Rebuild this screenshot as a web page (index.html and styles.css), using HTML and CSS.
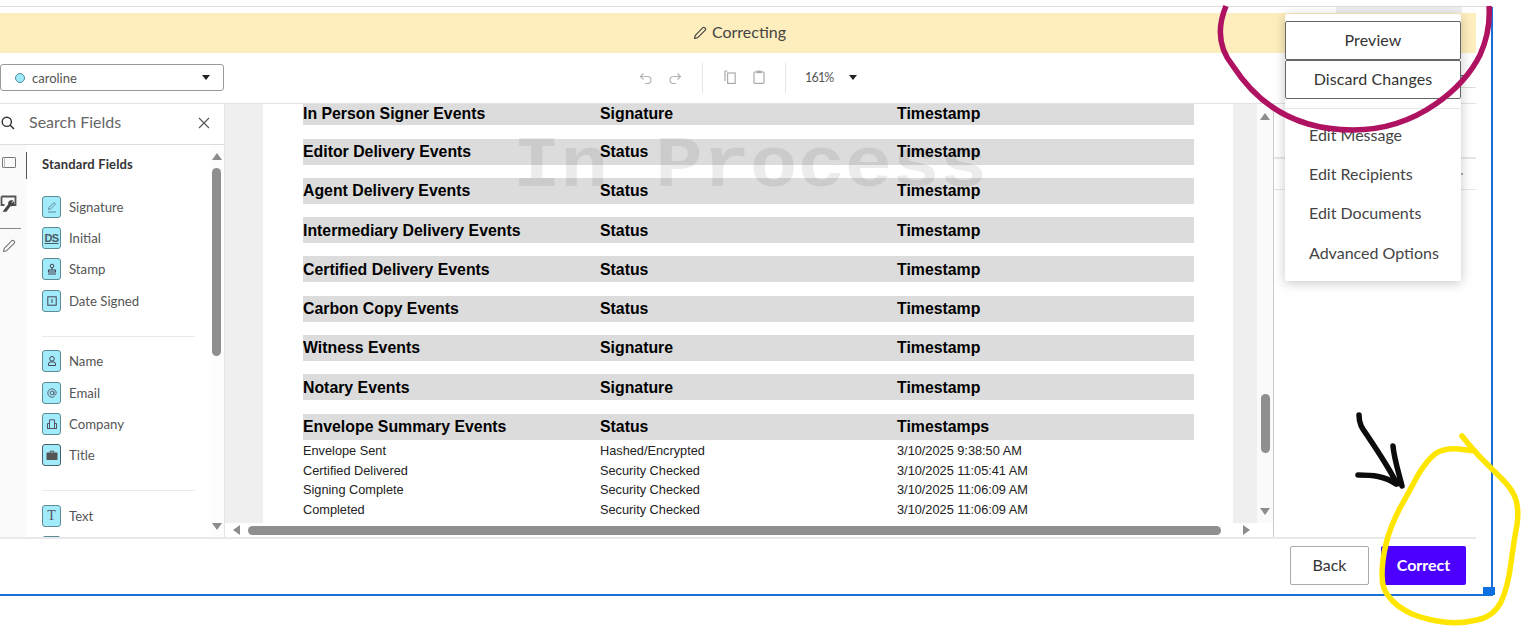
FILE: index.html
```html
<!DOCTYPE html>
<html lang="en">
<head>
<meta charset="utf-8">
<title>Correcting</title>
<link rel="stylesheet" href="styles.css">
</head>
<body>
<div class="topline"></div>
<div class="frame">
  <div class="strip"><div class="strip-tab"></div></div>
  <div class="banner">
    <svg class="banner-pencil" viewBox="0 0 14 14"><path d="M1.5 12.5l.8-3.2L9.900 1.700a1.200 1.200 0 0 1 1.700 0l.7.7a1.200 1.200 0 0 1 0 1.700l-7.600 7.600z" fill="none" stroke="#444" stroke-width="1.200" stroke-linejoin="round"/></svg>
    <span>Correcting</span>
  </div>
  <div class="toolbar">
    <div class="select"><span class="dot"></span><span class="select-name">caroline</span><span class="caret select-caret"></span></div>
    <svg class="tool tool-undo" viewBox="0 0 14 12"><path d="M4.500 1.500L1.500 4.500l3 3M1.500 4.500h7a3.500 3.500 0 0 1 0 7H6" fill="none" stroke="#b4b4b4" stroke-width="1.200"/></svg>
    <svg class="tool tool-redo" viewBox="0 0 14 12"><path d="M9.500 1.500l3 3-3 3M12.500 4.500h-7a3.500 3.500 0 0 0 0 7H8" fill="none" stroke="#b4b4b4" stroke-width="1.200"/></svg>
    <span class="sep sep-one"></span>
    <svg class="tool tool-copy" viewBox="0 0 12 14"><path d="M3.500 1H1v10" fill="none" stroke="#aaa" stroke-width="1.200"/><rect x="3.600" y="3" width="7.600" height="10.400" fill="none" stroke="#aaa" stroke-width="1.200"/></svg>
    <svg class="tool tool-paste" viewBox="0 0 12 14"><rect x="1" y="2" width="10" height="11.400" rx=".8" fill="none" stroke="#aaa" stroke-width="1.200"/><rect x="3.500" y=".6" width="5" height="2.600" fill="#aaa"/></svg>
    <span class="sep sep-two"></span>
    <span class="zoom-value">161%</span>
    <span class="caret zoom-caret"></span>
    <span class="toolbar-tab">Documents</span>
  </div>
  <div class="main">
    <aside class="fields">
      <div class="search">
        <svg class="search-icon" viewBox="0 0 14 14"><circle cx="5.800" cy="5.800" r="4.600" fill="none" stroke="#333" stroke-width="1.400"/><path d="M9.200 9.200l3.800 3.800" stroke="#333" stroke-width="1.500"/></svg>
        <span class="search-text">Search Fields</span>
        <svg class="search-close" viewBox="0 0 12 12"><path d="M1 1l10 10M11 1L1 11" stroke="#555" stroke-width="1.100"/></svg>
      </div>
      <div class="fields-body">
        <div class="rail">
          <div class="rail-tab">
            <svg class="rail-box" viewBox="0 0 14 11"><rect x=".5" y=".5" width="13" height="10" rx=".6" fill="none" stroke="#777"/><path d="M2.500 .5v10" stroke="#bbb"/></svg>
          </div>
          <svg class="rail-tool" viewBox="0 0 17 17"><path d="M1.500 1.500h14v8.500h-4.500M1.500 1.500v8.500h3" fill="none" stroke="#555" stroke-width="1.800"/><path d="M4 16l5-6.500c-.7-2 .8-4 3-3.600L10.400 7.700l1.500 1.400 1.700-1.600c.3 2-1.600 3.600-3.500 3L6 16z" fill="#444" stroke="#444" stroke-width="1.400"/></svg>
          <div class="rail-rule"></div>
          <svg class="rail-pencil" viewBox="0 0 14 14"><path d="M1.500 12.500l.8-3.200L9.900 1.700a1.200 1.200 0 0 1 1.700 0l.7.7a1.200 1.200 0 0 1 0 1.700l-7.600 7.600z" fill="none" stroke="#777" stroke-width="1.100" stroke-linejoin="round"/></svg>
        </div>
        <div class="field-list">
          <div class="field-title">Standard Fields</div>
          <div class="field"><span class="ficon"><svg viewBox="0 0 12 14"><path d="M2.500 9.500l.5-2L8 2.500l1.500 1.500-5 5zM2 12h8" fill="none" stroke="#5f8d98" stroke-width="1"/></svg></span><span>Signature</span></div>
          <div class="field"><span class="ficon ficon-ds">DS</span><span>Initial</span></div>
          <div class="field"><span class="ficon"><svg viewBox="0 0 12 14"><circle cx="6" cy="4" r="1.800" fill="none" stroke="#445" stroke-width="1"/><path d="M6 6v1.500M2.500 8h7v2h-7zM2 12h8" fill="none" stroke="#445" stroke-width="1.100"/></svg></span><span>Stamp</span></div>
          <div class="field"><span class="ficon"><svg viewBox="0 0 12 14"><rect x="1.800" y="2.800" width="8.400" height="8.400" fill="none" stroke="#445" stroke-width="1"/><path d="M6 5v4" stroke="#445" stroke-width="1"/></svg></span><span>Date Signed</span></div>
          <div class="field-rule"></div>
          <div class="field"><span class="ficon"><svg viewBox="0 0 12 14"><circle cx="6" cy="4.800" r="2.300" fill="none" stroke="#445" stroke-width="1"/><path d="M2.500 11.500V10a2 2 0 0 1 2-2h3a2 2 0 0 1 2 2v1.500z" fill="none" stroke="#445" stroke-width="1"/></svg></span><span>Name</span></div>
          <div class="field"><span class="ficon"><svg viewBox="0 0 12 14"><circle cx="6" cy="7" r="1.900" fill="none" stroke="#556" stroke-width=".9"/><path d="M7.900 5.300V8c0 1.500 2.300 1.300 2.300-1a4.200 4.200 0 1 0-1.700 3.400" fill="none" stroke="#556" stroke-width=".9"/></svg></span><span>Email</span></div>
          <div class="field"><span class="ficon"><svg viewBox="0 0 12 14"><path d="M3.500 11V2.800h5V11M1.500 11V6.500h2M8.500 6.500h2V11M1 11.500h10" fill="none" stroke="#556" stroke-width="1"/></svg></span><span>Company</span></div>
          <div class="field"><span class="ficon ficon-dark"><svg viewBox="0 0 12 14"><path d="M4.200 4.500V3.200h3.600v1.300" fill="none" stroke="#555" stroke-width="1"/><rect x=".5" y="4.500" width="11" height="7.500" rx=".8" fill="#555"/></svg></span><span>Title</span></div>
          <div class="field-rule"></div>
          <div class="field"><span class="ficon ficon-t">T</span><span>Text</span></div>
          <div class="field"><span class="ficon"></span></div>
        </div>
        <div class="vbar vbar-fields">
          <span class="arrow arrow-up"></span>
          <span class="vthumb vthumb-fields"></span>
          <span class="arrow arrow-down arrow-end"></span>
        </div>
      </div>
    </aside>
    <section class="viewer">
      <div class="viewport">
        <div class="pane">
          <div class="doc">
            <div class="watermark">In Process</div>
            <div class="row"><span>In Person Signer Events</span><span>Signature</span><span>Timestamp</span></div>
            <div class="row"><span>Editor Delivery Events</span><span>Status</span><span>Timestamp</span></div>
            <div class="row"><span>Agent Delivery Events</span><span>Status</span><span>Timestamp</span></div>
            <div class="row"><span>Intermediary Delivery Events</span><span>Status</span><span>Timestamp</span></div>
            <div class="row"><span>Certified Delivery Events</span><span>Status</span><span>Timestamp</span></div>
            <div class="row"><span>Carbon Copy Events</span><span>Status</span><span>Timestamp</span></div>
            <div class="row"><span>Witness Events</span><span>Signature</span><span>Timestamp</span></div>
            <div class="row"><span>Notary Events</span><span>Signature</span><span>Timestamp</span></div>
            <div class="summary">
              <div class="row"><span>Envelope Summary Events</span><span>Status</span><span>Timestamps</span></div>
              <div class="detail"><span>Envelope Sent</span><span>Hashed/Encrypted</span><span>3/10/2025 9:38:50 AM</span></div>
              <div class="detail"><span>Certified Delivered</span><span>Security Checked</span><span>3/10/2025 11:05:41 AM</span></div>
              <div class="detail"><span>Signing Complete</span><span>Security Checked</span><span>3/10/2025 11:06:09 AM</span></div>
              <div class="detail"><span>Completed</span><span>Security Checked</span><span>3/10/2025 11:06:09 AM</span></div>
            </div>
          </div>
        </div>
        <div class="vbar vbar-doc">
          <span class="arrow arrow-up"></span>
          <span class="vthumb vthumb-doc"></span>
          <span class="arrow arrow-down arrow-end"></span>
        </div>
      </div>
      <div class="hbar">
        <span class="arrow arrow-left"></span>
        <span class="hthumb"></span>
        <span class="arrow arrow-right"></span>
      </div>
    </section>
    <aside class="side">
      <div class="side-row side-row-first"></div>
      <div class="side-row side-row-second"><span class="side-mark"></span></div>
    </aside>
  </div>
  <div class="footer">
    <button class="btn btn-back">Back</button>
    <button class="btn btn-correct">Correct</button>
  </div>
</div>

<div class="handle"></div>

<div class="menu">
  <button class="menu-btn">Preview</button>
  <button class="menu-btn">Discard Changes</button>
  <div class="menu-rule"></div>
  <div class="menu-item">Edit Message</div>
  <div class="menu-item">Edit Recipients</div>
  <div class="menu-item">Edit Documents</div>
  <div class="menu-item">Advanced Options</div>
</div>

<svg class="marks" viewBox="0 0 1522 629">
  <path class="mark-magenta" d="M1226 6C1216 30 1220 50 1233 66C1255 100 1290 130 1353 130C1420 130 1465 85 1480 55C1489 35 1490 20 1489 6"/>
  <path class="mark-black" d="M1359 415C1359 424 1362 428 1367 435C1376 449 1388 466 1397 484M1393 446C1394 458 1398 470 1402 486M1358 475C1372 475 1385 476 1396 484"/>
  <path class="mark-yellow" d="M1462 436Q1473 450 1483 460Q1493 470 1503 480Q1513 490 1516 500Q1519 510 1517 525Q1514 540 1511 563Q1508 587 1501 602Q1493 617 1477 620Q1460 624 1444 622Q1427 620 1412 614Q1397 607 1390 598Q1382 590 1382 575Q1382 560 1386 544Q1390 527 1400 508Q1410 490 1418 475Q1427 460 1435 454Q1443 448 1459 449L1475 451"/>
</svg>
</body>
</html>
```
FILE: styles.css
```css
* { box-sizing: border-box; }

html, body {
  margin: 0;
  height: 100%;
  overflow: hidden;
  background: #fff;
}

body {
  position: relative;
  font-family: Lato, "Noto Sans", sans-serif;
  color: #444;
}

.topline {
  width: 1491px;
  height: 7px;
  border-bottom: 1px solid #dedede;
}

.frame {
  width: 1493px;
  height: 589px;
  padding-right: 15px;
  border-right: 2px solid #1a6fd6;
  border-bottom: 2px solid #1a6fd6;
  display: flex;
  flex-direction: column;
}

.strip {
  height: 6px;
  display: flex;
  justify-content: flex-end;
  padding-right: 14px;
}

.strip-tab {
  width: 126px;
  background: #eee;
}

.banner {
  height: 40px;
  background: #feeebd;
  display: flex;
  align-items: center;
  justify-content: center;
  gap: 5px;
  font-size: 16px;
  color: #444;
  padding: 0 0 3px 3px;
}

.banner-pencil { width: 14px; height: 14px; margin-top: 2px; }

.toolbar {
  margin-top: 1px;
  height: 50px;
  padding-bottom: 2px;
  border-bottom: 1px solid #e2e2e2;
  display: flex;
  align-items: center;
}

.select {
  width: 224px;
  height: 27px;
  border: 1px solid #999;
  border-radius: 3px;
  display: flex;
  align-items: center;
  padding-left: 14px;
  flex: none;
}

.dot {
  width: 10px;
  height: 10px;
  border-radius: 50%;
  background: #9feaf9;
  border: 1px solid #4f8c99;
}

.select-name {
  margin-left: 7px;
  font-size: 13px;
  color: #555;
}

.caret {
  width: 0;
  height: 0;
  border-left: 4.5px solid transparent;
  border-right: 4.5px solid transparent;
  border-top: 5px solid #222;
}

.select-caret { margin-left: auto; margin-right: 13px; }

.tool { flex: none; }
.tool-undo { width: 14px; height: 12px; margin-left: 415px; }
.tool-redo { width: 14px; height: 12px; margin-left: 15px; }
.tool-copy { width: 12px; height: 14px; margin-left: 21px; margin-top: -1px; }
.tool-paste { width: 12px; height: 14px; margin-left: 17px; margin-top: -1px; }

.sep {
  width: 1px;
  height: 30px;
  background: #e6e6e6;
  flex: none;
}
.sep-one { margin-left: 20px; }
.sep-two { margin-left: 20px; }

.zoom-value {
  margin-left: 19px;
  font-size: 12.5px;
  letter-spacing: -0.8px;
  color: #555;
}

.zoom-caret { margin-left: 15px; }

.toolbar-tab {
  margin-left: auto;
  align-self: flex-start;
  height: 34px;
  width: 110px;
  padding: 15px 11px 0 0;
  text-align: right;
  font-size: 13px;
  line-height: 17px;
  color: #555;
  border-bottom: 1px solid #ddd;
}

.main {
  height: 433px;
  display: flex;
}

.fields {
  width: 225px;
  flex: none;
  border-right: 1px solid #e4e4e4;
  display: flex;
  flex-direction: column;
}

.search {
  height: 41px;
  padding-bottom: 2px;
  border-bottom: 1px solid #ddd;
  display: flex;
  align-items: center;
  flex: none;
}

.search-icon { width: 14px; height: 14px; margin-left: 1px; flex: none; }
.search-text { margin: 0 0 3px 14px; font-size: 16px; color: #666; }
.search-close { width: 12px; height: 12px; margin-left: auto; margin-right: 14px; }

.fields-body {
  flex: 1;
  display: flex;
  min-height: 0;
}

.rail {
  width: 27px;
  flex: none;
  background: #fafafa;
  display: flex;
  flex-direction: column;
}

.rail-tab {
  margin-top: 7px;
  height: 27px;
  padding-top: 5px;
  border-right: 1px solid #555;
  display: flex;
  align-items: flex-start;
}

.rail-box { width: 14px; height: 11px; margin-left: 2px; }
.rail-tool { width: 17px; height: 17px; margin: 16px 0 0 0; }
.rail-rule { width: 21px; height: 1px; margin-top: 16px; background: #888; }
.rail-pencil { width: 14px; height: 14px; margin: 10px 0 0 2px; }

.field-list {
  flex: 1;
  min-width: 0;
  padding-left: 15px;
  overflow: hidden;
}

.field-title {
  height: 46px;
  padding-top: 12px;
  font-size: 13px;
  letter-spacing: 0.15px;
  line-height: 15px;
  font-weight: 700;
  color: #333;
}

.field {
  height: 31.4px;
  display: flex;
  align-items: center;
  gap: 8px;
  font-size: 13.2px;
  color: #555;
}

.ficon {
  width: 19px;
  height: 22px;
  flex: none;
  background: #a2ebfa;
  border: 1px solid #5d8b96;
  border-radius: 3px;
  display: flex;
  align-items: center;
  justify-content: center;
}

.ficon svg { width: 12px; height: 14px; }

.ficon-ds {
  font-family: "Liberation Sans", Arial, sans-serif;
  font-size: 11px;
  font-weight: 700;
  letter-spacing: -0.6px;
  color: #4a5a62;
  text-decoration: underline;
  line-height: 1;
}

.ficon-t {
  font-family: "Liberation Serif", serif;
  font-size: 14px;
  color: #556;
}

.ficon-dark { border-color: #46606a; }

.field-rule {
  width: 153px;
  height: 1px;
  background: #eaeaea;
  margin: 19px 0 9px;
}

.vbar {
  flex: none;
  display: flex;
  flex-direction: column;
  align-items: center;
}

.vbar-fields {
  width: 13px;
  padding: 8px 2px 7px 0;
  background: #fdfdfd;
}

.vbar-doc {
  width: 16px;
  padding-top: 9px;
  padding-bottom: 8px;
  background: #fafafa;
}

.arrow {
  width: 0;
  height: 0;
  flex: none;
}

.arrow-up {
  border-left: 5px solid transparent;
  border-right: 5px solid transparent;
  border-bottom: 7px solid #8c8c8c;
}

.arrow-down {
  border-left: 5px solid transparent;
  border-right: 5px solid transparent;
  border-top: 7px solid #8c8c8c;
}

.arrow-left {
  border-top: 5px solid transparent;
  border-bottom: 5px solid transparent;
  border-right: 7px solid #8c8c8c;
}

.arrow-right {
  border-top: 5px solid transparent;
  border-bottom: 5px solid transparent;
  border-left: 7px solid #8c8c8c;
}

.arrow-end { margin-top: auto; }

.vthumb {
  width: 9px;
  background: #8f8f8f;
  border-radius: 4.5px;
}

.vthumb-fields { height: 188px; margin-top: 8px; }
.vthumb-doc { height: 59px; margin-top: 274px; }

.viewer {
  width: 1049px;
  flex: none;
  display: flex;
  flex-direction: column;
  border-right: 1px solid #ccc;
}

.viewport {
  flex: 1;
  min-height: 0;
  display: flex;
}

.pane {
  width: 1032px;
  flex: none;
  background: #efefef;
  padding: 0 24px 0 38px;
  overflow: hidden;
}

.doc {
  position: relative;
  height: 100%;
  background: #fff;
  padding: 0 39px 0 40px;
  display: flex;
  flex-direction: column;
  gap: 13.3px;
  font-family: "Liberation Sans", Arial, sans-serif;
  color: #000;
}

.watermark {
  position: absolute;
  left: 250px;
  top: 24px;
  font-family: "Liberation Mono", monospace;
  font-weight: 700;
  font-size: 79px;
  line-height: 78px;
  white-space: nowrap;
  color: rgba(0, 0, 0, 0.075);
  transform: scaleY(0.92);
}

.row {
  height: 26px;
  flex: none;
  padding-top: 1px;
  background: #dcdcdc;
  display: grid;
  grid-template-columns: 297px 297px 1fr;
  align-items: center;
  font-size: 15.85px;
  font-weight: 700;
}

.row:nth-child(2) { margin-top: -4.8px; padding-top: 3px; }

.summary { flex: none; }

.detail {
  height: 19.5px;
  display: grid;
  grid-template-columns: 297px 297px 1fr;
  align-items: center;
  font-size: 12.75px;
  color: #222;
}

.row + .detail { margin-top: 1.4px; }

.hbar {
  height: 14px;
  flex: none;
  display: flex;
  align-items: center;
  padding-left: 8px;
  background: #fff;
}

.hthumb {
  width: 973px;
  height: 9px;
  margin-left: 8px;
  border-radius: 4.5px;
  background: #8f8f8f;
}

.arrow-right { margin-left: 22px; }

.side {
  flex: 1;
  min-width: 0;
  padding-top: 53px;
}

.side-row {
  border-top: 1px solid #e6e6e6;
}

.side-row-first { height: 0; }

.side-row-second {
  height: 32px;
  border-bottom: 1px solid #e6e6e6;
  display: flex;
  justify-content: flex-end;
  align-items: center;
  padding-right: 13px;
}

.side-mark {
  width: 2px;
  height: 2px;
  background: #aaa;
}

.footer {
  flex: 1;
  border-top: 2px solid #e9e9e9;
  display: flex;
  justify-content: flex-end;
  align-items: flex-start;
  gap: 12px;
  padding: 7px 10px 0 0;
}

.btn {
  height: 39px;
  padding: 0 0 2px;
  font-family: inherit;
  font-size: 16px;
  border-radius: 2px;
  cursor: pointer;
}

.btn-back {
  width: 79px;
  background: #fff;
  border: 1px solid #aaa;
  color: #333;
}

.btn-correct {
  width: 85px;
  background: #4c00ff;
  border: 0;
  color: #fff;
  font-weight: 700;
}

.handle {
  position: absolute;
  left: 1483px;
  top: 587px;
  width: 12px;
  height: 8px;
  background: #0a6fe0;
}

.menu {
  position: absolute;
  left: 1285px;
  top: 14px;
  width: 176px;
  height: 267px;
  padding-top: 7px;
  background: #fff;
  border-radius: 2px;
  box-shadow: 0 2px 12px rgba(0, 0, 0, 0.22);
}

.menu-btn {
  display: block;
  width: 100%;
  height: 39px;
  padding: 0 0 2px;
  background: #fff;
  border: 1px solid #666;
  border-radius: 2px;
  font-family: inherit;
  font-size: 16px;
  letter-spacing: 0.1px;
  color: #333;
}

.menu-rule {
  height: 1px;
  margin-top: 9px;
  background: #e6e6e6;
}

.menu-item {
  height: 39.3px;
  padding: 0 0 3px 24px;
  display: flex;
  align-items: center;
  font-size: 16px;
  color: #444;
}

.menu-rule + .menu-item { margin-top: 7px; }

.marks {
  position: absolute;
  left: 0;
  top: 0;
  width: 1522px;
  height: 629px;
  pointer-events: none;
  fill: none;
}

.mark-magenta { stroke: #ae1260; stroke-width: 5.5; }
.mark-black { stroke: #0c0c0c; stroke-width: 5.5; stroke-linecap: round; stroke-linejoin: round; }
.mark-yellow { stroke: #ffe600; stroke-width: 5.5; stroke-linecap: round; stroke-linejoin: round; }
```
